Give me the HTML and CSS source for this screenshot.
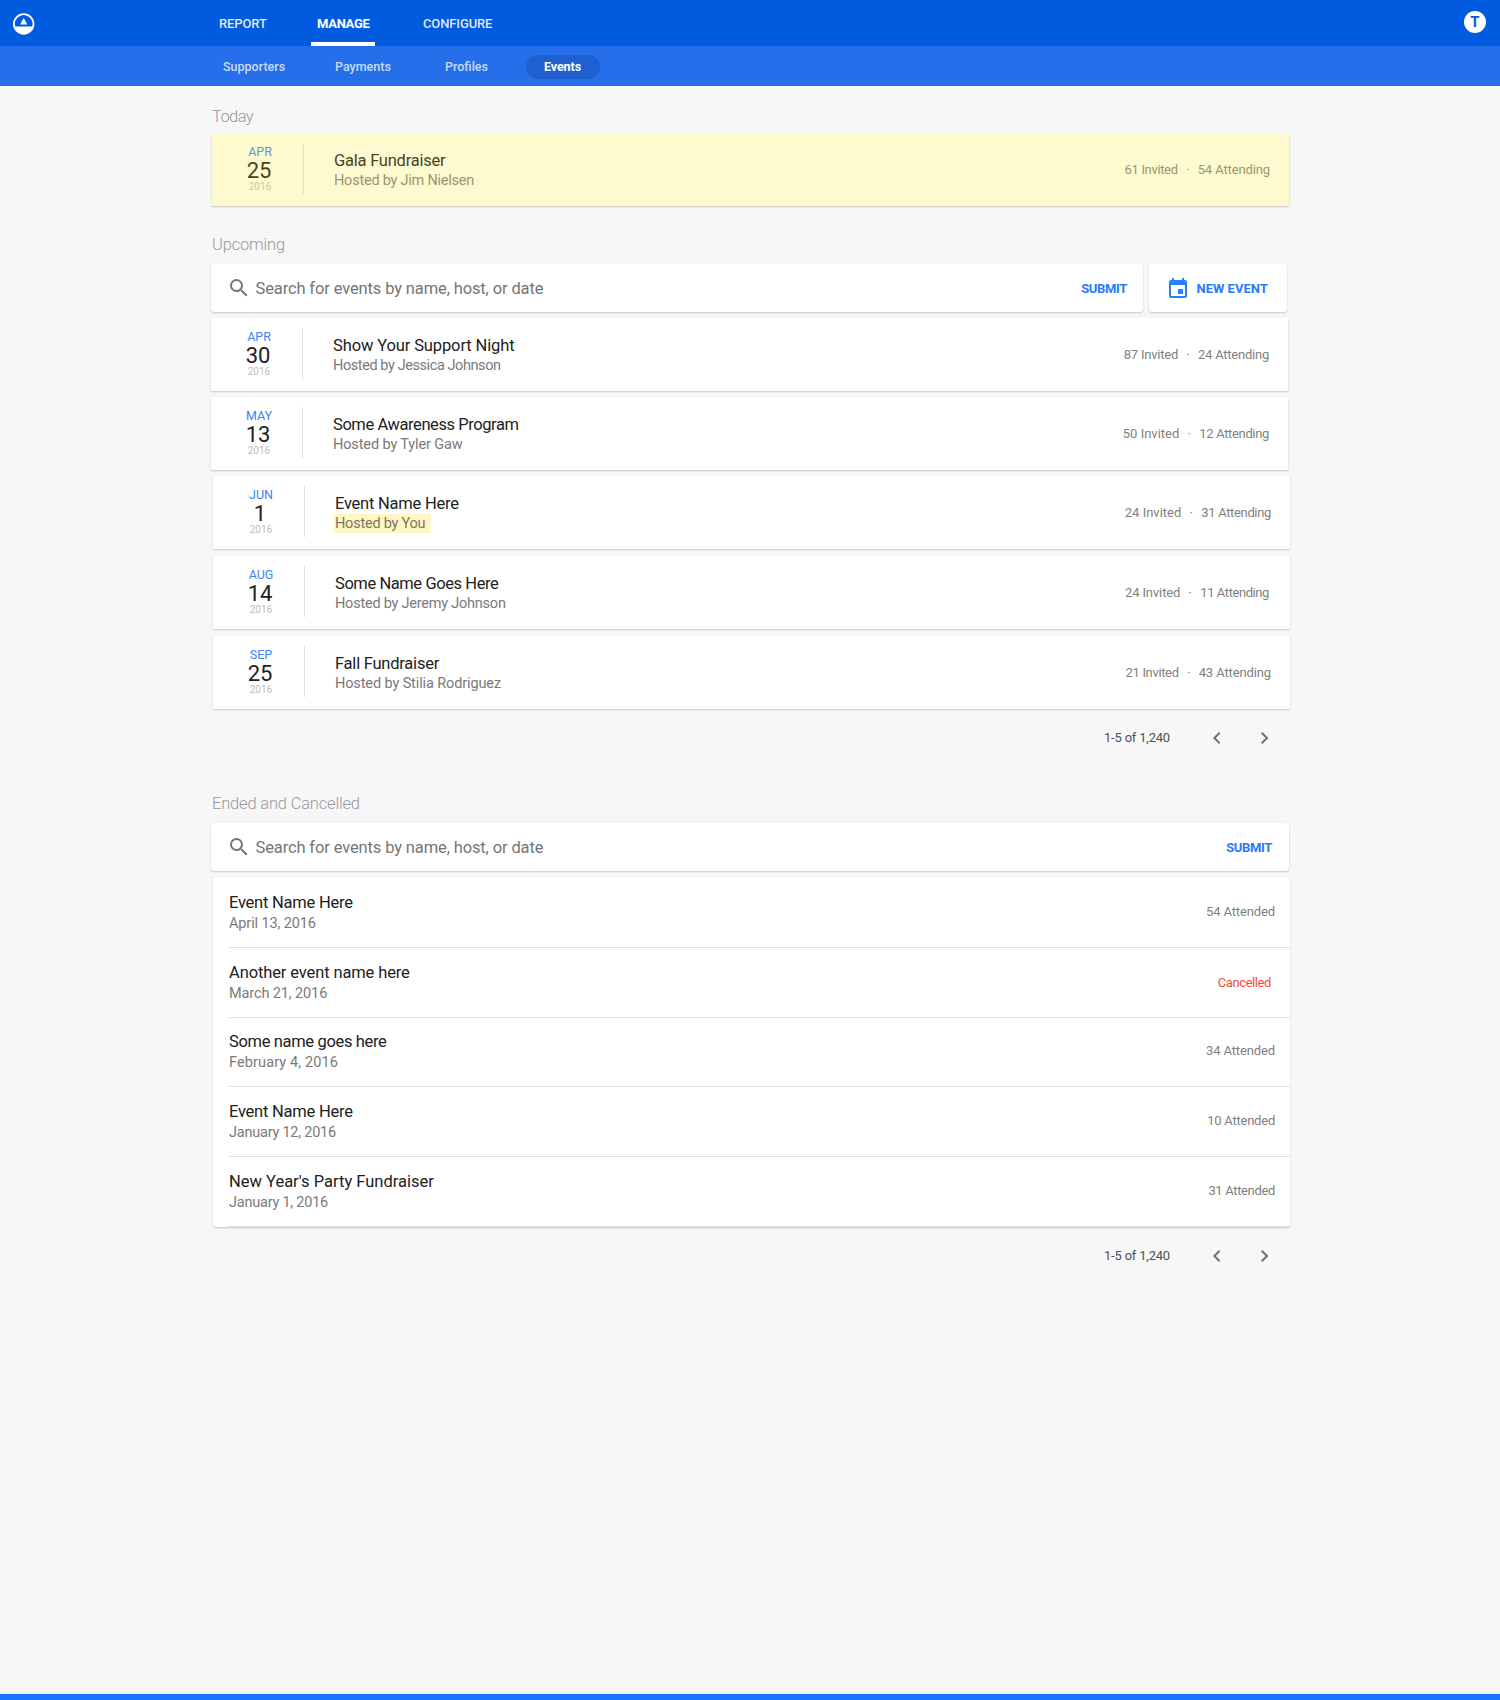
FILE: index.html
```html
<!DOCTYPE html>
<html lang="en">
<head>
<meta charset="utf-8">
<title>Events</title>
<link rel="stylesheet" href="styles.css">
</head>
<body>
<header class="topbar">
  <svg class="logo" viewBox="0 0 22 22"><circle cx="10.7" cy="11" r="9.8" fill="none" stroke="#fff" stroke-width="1.8"/><path d="M1.2 13.5h19A10 10 0 0 1 1.2 13.5z" fill="#fff"/><path d="M10.7 5l3.6 6.6H7.1z" fill="#fff"/></svg>
  <nav class="tabs">
    <a class="tab tab-report">REPORT</a>
    <a class="tab tab-manage active">MANAGE</a>
    <a class="tab tab-configure">CONFIGURE</a>
  </nav>
  <span class="avatar">T</span>
</header>
<nav class="subnav">
  <a class="sub sub-supporters">Supporters</a>
  <a class="sub sub-payments">Payments</a>
  <a class="sub sub-profiles">Profiles</a>
  <a class="sub sub-events active">Events</a>
</nav>

<main class="page">
  <h2 class="heading heading-today">Today</h2>
  <article class="card event today">
    <div class="date"><span class="month">APR</span><span class="day">25</span><span class="year">2016</span></div>
    <div class="info"><h3 class="title track-2">Gala Fundraiser</h3><p class="host track-2">Hosted by Jim Nielsen</p></div>
    <div class="counts"><span class="track-3">61 Invited</span><i>·</i><span class="track-1">54 Attending</span></div>
  </article>

  <h2 class="heading heading-upcoming">Upcoming</h2>
  <div class="tools">
    <div class="card search">
      <svg class="glass" viewBox="3 3 17.5 17.5"><path d="M15.5 14h-.79l-.28-.27A6.47 6.47 0 0 0 16 9.5 6.5 6.5 0 1 0 9.5 16c1.61 0 3.09-.59 4.23-1.57l.27.28v.79l5 4.99L20.49 19l-4.99-5zm-6 0C7.01 14 5 11.99 5 9.5S7.01 5 9.5 5 14 7.01 14 9.5 11.99 14 9.5 14z"/></svg>
      <span class="placeholder">Search for events by name, host, or date</span>
      <a class="action submit">SUBMIT</a>
    </div>
    <div class="card create">
      <svg class="calendar" viewBox="3 1 18 20"><path d="M17 12h-5v5h5v-5zM16 1v2H8V1H6v2H5c-1.11 0-1.99.9-1.99 2L3 19a2 2 0 0 0 2 2h14c1.1 0 2-.9 2-2V5c0-1.1-.9-2-2-2h-1V1h-2zm3 18H5V8h14v11z"/></svg>
      <a class="action new-event">NEW EVENT</a>
    </div>
  </div>

  <div class="events">
    <article class="card event shift">
      <div class="date"><span class="month">APR</span><span class="day">30</span><span class="year">2016</span></div>
      <div class="info"><h3 class="title track-1">Show Your Support Night</h3><p class="host track-4">Hosted by Jessica Johnson</p></div>
      <div class="counts"><span class="track-2">87 Invited</span><i>·</i><span class="track-2">24 Attending</span></div>
    </article>
    <article class="card event shift">
      <div class="date"><span class="month">MAY</span><span class="day">13</span><span class="year">2016</span></div>
      <div class="info"><h3 class="title track-4">Some Awareness Program</h3><p class="host track-1">Hosted by Tyler Gaw</p></div>
      <div class="counts"><span>50 Invited</span><i>·</i><span class="track-3">12 Attending</span></div>
    </article>
    <article class="card event">
      <div class="date"><span class="month">JUN</span><span class="day">1</span><span class="year">2016</span></div>
      <div class="info"><h3 class="title track-2">Event Name Here</h3><p class="host track-2 you">Hosted by You</p></div>
      <div class="counts"><span>24 Invited</span><i>·</i><span class="track-3">31 Attending</span></div>
    </article>
    <article class="card event spaced">
      <div class="date"><span class="month">AUG</span><span class="day">14</span><span class="year">2016</span></div>
      <div class="info"><h3 class="title track-4">Some Name Goes Here</h3><p class="host track-2">Hosted by Jeremy Johnson</p></div>
      <div class="counts inset"><span class="track-1">24 Invited</span><i>·</i><span class="track-4">11 Attending</span></div>
    </article>
    <article class="card event spaced">
      <div class="date"><span class="month">SEP</span><span class="day">25</span><span class="year">2016</span></div>
      <div class="info"><h3 class="title track-2">Fall Fundraiser</h3><p class="host track-1">Hosted by Stilia Rodriguez</p></div>
      <div class="counts"><span class="track-3">21 Invited</span><i>·</i><span class="track-1">43 Attending</span></div>
    </article>
  </div>
  <div class="pager">
    <span class="range">1-5 of 1,240</span>
    <svg class="chevron" viewBox="8 6 7.41 12"><path d="M15.41 7.41L14 6l-6 6 6 6 1.41-1.41L10.83 12z"/></svg>
    <svg class="chevron" viewBox="8.59 6 7.41 12"><path d="M10 6L8.59 7.41 13.17 12l-4.58 4.59L10 18l6-6z"/></svg>
  </div>

  <h2 class="heading heading-ended">Ended and Cancelled</h2>
  <div class="card search wide">
    <svg class="glass" viewBox="3 3 17.5 17.5"><path d="M15.5 14h-.79l-.28-.27A6.47 6.47 0 0 0 16 9.5 6.5 6.5 0 1 0 9.5 16c1.61 0 3.09-.59 4.23-1.57l.27.28v.79l5 4.99L20.49 19l-4.99-5zm-6 0C7.01 14 5 11.99 5 9.5S7.01 5 9.5 5 14 7.01 14 9.5 11.99 14 9.5 14z"/></svg>
    <span class="placeholder">Search for events by name, host, or date</span>
    <a class="action submit">SUBMIT</a>
  </div>
  <div class="card past">
    <div class="row tall"><div><h3 class="title track-2">Event Name Here</h3><p class="when track-1">April 13, 2016</p></div><span class="status track-1">54 Attended</span></div>
    <div class="row"><div><h3 class="title track-1">Another event name here</h3><p class="when track-1">March 21, 2016</p></div><span class="status track-4 cancelled">Cancelled</span></div>
    <div class="row short"><div><h3 class="title track-3">Some name goes here</h3><p class="when wide-text">February 4, 2016</p></div><span class="status track-1">34 Attended</span></div>
    <div class="row"><div><h3 class="title track-2">Event Name Here</h3><p class="when track-2">January 12, 2016</p></div><span class="status track-2">10 Attended</span></div>
    <div class="row"><div><h3 class="title">New Year's Party Fundraiser</h3><p class="when track-2">January 1, 2016</p></div><span class="status track-3">31 Attended</span></div>
  </div>
  <div class="pager">
    <span class="range">1-5 of 1,240</span>
    <svg class="chevron" viewBox="8 6 7.41 12"><path d="M15.41 7.41L14 6l-6 6 6 6 1.41-1.41L10.83 12z"/></svg>
    <svg class="chevron" viewBox="8.59 6 7.41 12"><path d="M10 6L8.59 7.41 13.17 12l-4.58 4.59L10 18l6-6z"/></svg>
  </div>
</main>
<footer class="footer"></footer>
</body>
</html>
```
FILE: styles.css
```css
* { box-sizing: border-box; }
body {
  margin: 0;
  height: 1700px;
  display: flex;
  flex-direction: column;
  background: #f7f7f7;
  color: #212121;
  font-family: Roboto, "Noto Sans", sans-serif;
}
h2, h3, p { margin: 0; font-weight: 400; }
svg { display: block; flex: none; }

/* Letter-spacing steps */
.track-1 { letter-spacing: -.12px; }
.track-2 { letter-spacing: -.23px; }
.track-3 { letter-spacing: -.34px; }
.track-4 { letter-spacing: -.42px; }
.wide-text { letter-spacing: .12px; }

.topbar {
  display: flex;
  height: 46px;
  flex: none;
  background: #005bdf;
  padding: 0 14px 0 13px;
}
.logo { width: 22px; height: 22px; margin-top: 13px; }
.tabs { display: flex; margin-left: 177px; }
.tab {
  height: 46px;
  padding: 14px 0 0 6px;
  font-size: 13px;
  line-height: 19px;
  font-weight: 500;
  letter-spacing: -.12px;
  color: rgba(255, 255, 255, .88);
  white-space: nowrap;
}
.tab-report { width: 99px; padding-left: 7px; }
.tab-manage { width: 64px; }
.tab-configure { margin-left: 42px; }
.tab.active { color: #fff; font-weight: 700; letter-spacing: -.3px; border-bottom: 4px solid #fff; }
.avatar {
  width: 22px;
  height: 22px;
  margin: 11px 0 0 auto;
  border-radius: 50%;
  background: #fff;
  color: #005bdf;
  font-size: 15px;
  font-weight: 700;
  line-height: 23px;
  text-align: center;
}

.subnav {
  display: flex;
  height: 40px;
  flex: none;
  padding: 9px 0 0 223px;
  background: #256fea;
}
.sub {
  height: 24px;
  font-size: 12.5px;
  line-height: 24px;
  font-weight: 500;
  color: rgba(255, 255, 255, .75);
  white-space: nowrap;
}
.sub-supporters { width: 112px; }
.sub-payments { width: 110px; }
.sub-profiles { width: 81px; }
.sub.active {
  width: 74px;
  padding-right: 1px;
  border-radius: 12px;
  background: #205fcf;
  color: #fff;
  font-weight: 700;
  letter-spacing: -.1px;
  text-align: center;
}

.page { width: 1079px; margin-left: 211px; }
.heading {
  margin-left: 1px;
  height: 20px;
  font-size: 16.5px;
  line-height: 20px;
  font-weight: 300;
  letter-spacing: -.18px;
  color: #999;
}
.heading-today { margin-top: 21px; letter-spacing: -.6px; }
.heading-upcoming { margin-top: 29px; }
.heading-ended { margin-top: 29px; }

.card {
  background: #fff;
  border-radius: 1px;
  box-shadow: 0 1px 2px rgba(0, 0, 0, .2), 0 0 1px rgba(0, 0, 0, .06);
}
.event { display: flex; height: 73px; width: 1077px; margin-left: 2px; }
.event.shift { margin-left: 0; }
.event.today { margin: 6px 0 0 1px; background: #fefacf; }
.date {
  width: 92px;
  height: 51px;
  margin-top: 10px;
  padding: 1px 0 0 5px;
  border-right: 1px solid #e0e0e0;
  display: flex;
  flex-direction: column;
  align-items: center;
}
.month { font-size: 12.5px; line-height: 16px; color: #3d82f7; }
.day { margin-left: -2px; font-size: 22px; line-height: 21px; }
.year { font-size: 10px; line-height: 11px; color: #bdbdbd; }
.info { margin-left: 30px; padding-top: 18px; }
.title { font-size: 16.5px; line-height: 20px; white-space: nowrap; }
.host { margin-top: 1px; font-size: 14.5px; line-height: 18px; color: #7a7a7a; white-space: nowrap; }
.host.you {
  width: 97px;
  height: 19px;
  margin: 0 0 0 -1px;
  padding-left: 1px;
  line-height: 20px;
  background: #fff6c4;
  color: #7c7862;
}
.today .date { border-color: #e5e1ba; }
.today .month { color: #6297cf; }
.today .title, .today .day { color: #46441f; }
.today .host, .today .counts { color: #99966f; }
.today .year { color: #cdc9a2; }
.counts {
  display: flex;
  align-items: center;
  margin: 0 19px 0 auto;
  font-size: 13px;
  line-height: 18px;
  color: #7f7f7f;
}
.counts.inset { margin-right: 21px; }
.counts i { width: 20px; text-align: center; font-style: normal; }

.tools { display: flex; gap: 6px; margin-top: 9px; }
.search, .create {
  display: flex;
  align-items: center;
  height: 48px;
  border-radius: 3px;
}
.search { width: 932px; padding: 0 16px 0 19px; }
.search.wide { width: 1078px; margin-top: 9px; padding-right: 17px; }
.glass { width: 17.5px; height: 17.5px; fill: #757575; }
.placeholder { margin-left: 8px; padding-top: 2px; font-size: 16.5px; line-height: 20px; letter-spacing: -.13px; color: #757575; }
.action { padding-top: 2px; font-size: 13px; line-height: 18px; font-weight: 700; color: #2979ff; white-space: nowrap; }
.submit { margin-left: auto; letter-spacing: -.35px; }
.create { width: 138px; padding-left: 20px; }
.calendar { width: 18px; height: 20px; fill: #2680ff; }
.new-event { margin-left: 9.5px; }

.events { display: flex; flex-direction: column; gap: 6px; margin-top: 6px; }
.spaced { margin-top: 1px; }

.pager {
  display: flex;
  align-items: center;
  height: 56px;
  padding-left: 893px;
}
.range { width: 109px; flex: none; font-size: 13px; letter-spacing: -.2px; color: #505050; white-space: nowrap; }
.chevron { width: 7.41px; height: 12px; margin: 1px 41px 0 0; fill: #707070; }

.past { width: 1077px; margin: 6px 0 0 2px; padding-left: 16px; border-radius: 3px; }
.row {
  display: flex;
  height: 70px;
  padding: 15px 15px 0 0;
  border-bottom: 1px solid #e0e0e0;
}
.row.tall { height: 71px; padding-top: 16px; }
.row.short { height: 69px; padding-top: 14px; }
.when { margin-top: 1px; font-size: 14.5px; line-height: 20px; color: #7a7a7a; }
.status { margin: 10px 0 0 auto; font-size: 13px; line-height: 18px; color: #7f7f7f; }
.cancelled { margin-top: 11px; margin-right: 4px; color: #f44b40; }

.footer { height: 6px; flex: none; margin-top: auto; background: #1976ff; }
```
